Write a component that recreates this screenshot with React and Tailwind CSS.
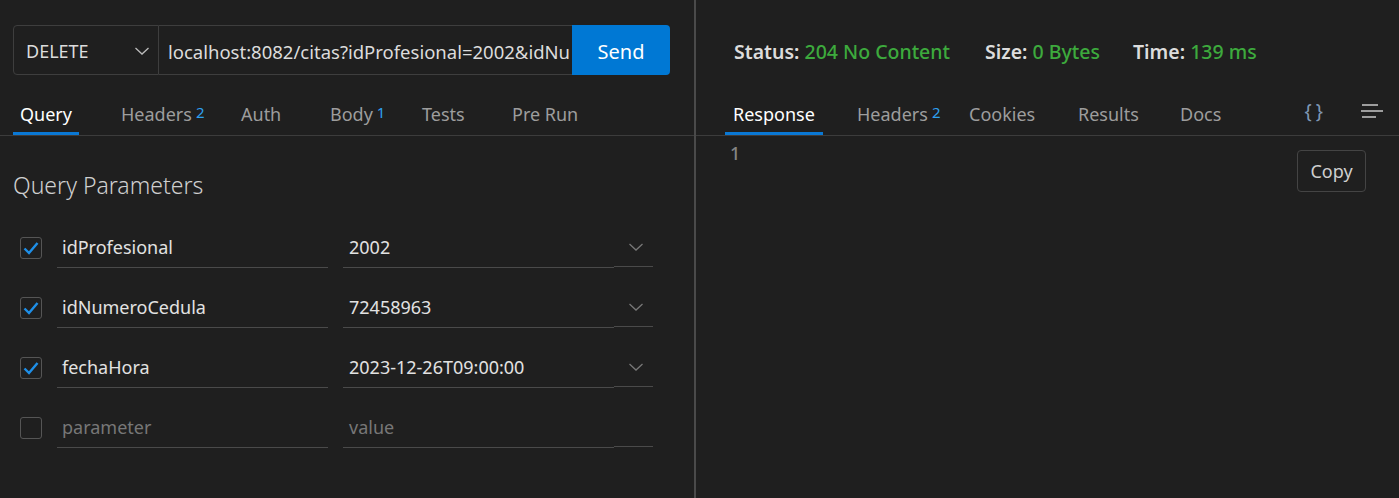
import React from 'react'

const font = { fontFamily: '"Noto Sans", "Open Sans", sans-serif' }

function Chevron({ className }) {
  return (
    <svg className={className} width="16" height="10" viewBox="0 0 16 10" fill="none">
      <path d="M1.5 2l6.5 6 6.5-6" stroke="currentColor" strokeWidth="1.3" />
    </svg>
  )
}

function Checkbox({ checked }) {
  return (
    <div className="w-[22px] h-[22px] rounded-[3px] border border-[#555] flex items-center justify-center">
      {checked && (
        <svg width="16" height="14" viewBox="0 0 16 14" fill="none">
          <path d="M1.5 7.5l4.5 4.5 8.5-10" stroke="#1e8fe8" strokeWidth="2.4" />
        </svg>
      )}
    </div>
  )
}

function ParamRow({ checked, name, value, placeholder }) {
  return (
    <div className="flex items-center h-[40px]">
      <div className="w-[44px] pl-[7px]">
        <Checkbox checked={checked} />
      </div>
      <div className="w-[271px] h-full flex items-center pl-[5px] border-b border-[#4a4a4a]">
        {name ? (
          <span className="text-[#e2e2e2]">{name}</span>
        ) : (
          <span className="text-[#777]">{placeholder[0]}</span>
        )}
      </div>
      <div className="ml-[15px] flex h-full">
        <div className="w-[271px] h-full flex items-center pl-[6px] border-b border-[#4a4a4a]">
          {value ? (
            <span className="text-[#e2e2e2]">{value}</span>
          ) : (
            <span className="text-[#777]">{placeholder[1]}</span>
          )}
        </div>
        <div className="w-[39px] h-[39px] flex items-center justify-center border-b border-[#4a4a4a] text-[#777]">
          {checked && <Chevron className="ml-[4px]" />}
        </div>
      </div>
    </div>
  )
}

function Tab({ t, w, px }) {
  return (
    <div className={`${w} shrink-0`}>
      <div className={`inline-block ${px} pb-[4px] border-b-[3px] ${t.active ? 'border-[#0a78d4] text-white' : 'border-transparent text-[#9d9d9d]'}`}>
        {t.label}
        {t.sup && <sup className="text-[#2ea1f0] text-[15px] ml-[4px] relative top-[-3px]">{t.sup}</sup>}
      </div>
    </div>
  )
}

export default function App() {
  const leftTabs = [
    { label: 'Query', w: 'w-[101px]', active: true },
    { label: 'Headers', sup: '2', w: 'w-[120px]' },
    { label: 'Auth', w: 'w-[89px]' },
    { label: 'Body', sup: '1', w: 'w-[92px]' },
    { label: 'Tests', w: 'w-[90px]' },
    { label: 'Pre Run', w: 'w-[100px]' },
  ]
  const rightTabs = [
    { label: 'Response', w: 'w-[124px]', active: true },
    { label: 'Headers', sup: '2', w: 'w-[112px]' },
    { label: 'Cookies', w: 'w-[109px]' },
    { label: 'Results', w: 'w-[102px]' },
    { label: 'Docs', w: 'w-[100px]' },
  ]

  return (
    <div className="w-[1399px] h-[498px] bg-[#1f1f1f] flex text-[18px] overflow-hidden" style={font}>
      {/* Request panel */}
      <div className="w-[694px] h-full flex flex-col">
        <div className="pt-[25px] pl-[13px] pr-[24px]">
          <div className="flex h-[50px]">
            <div className="w-[146px] flex items-center justify-between pl-[12px] pr-[8px] pt-[3px] border border-[#3e3e3e] rounded-l-[4px] text-[#dcdcdc]">
              <span>DELETE</span>
              <Chevron className="text-[#bbb] -mt-[2px]" />
            </div>
            <div className="flex-1 min-w-0 flex items-center border-y border-[#3e3e3e] pl-[9px] pt-[3px] overflow-hidden whitespace-nowrap text-[18.5px] text-[#dcdcdc]">
              <span className="overflow-hidden">localhost:8082/citas?idProfesional=2002&amp;idNu</span>
            </div>
            <button className="w-[98px] shrink-0 bg-[#0078d4] text-white text-[20px] pt-[3px] rounded-r-[4px]">Send</button>
          </div>
        </div>

        <div className="h-[61px] flex items-end border-b border-[#3c3c3c] pl-[13px]">
          {leftTabs.map((t) => (
            <Tab key={t.label} t={t} w={t.w} px="px-[7px]" />
          ))}
        </div>

        <div className="pl-[13px] h-[92px] flex items-center pt-[7px]">
          <span className="text-[23px] text-[#cfcfcf] font-light">Query Parameters</span>
        </div>

        <div className="pl-[13px] flex flex-col gap-[20px]">
          <ParamRow checked name="idProfesional" value="2002" />
          <ParamRow checked name="idNumeroCedula" value="72458963" />
          <ParamRow checked name="fechaHora" value="2023-12-26T09:00:00" />
          <ParamRow placeholder={['parameter', 'value']} />
        </div>
      </div>

      <div className="w-[2px] h-full bg-[#4a4a4a]" />

      {/* Response panel */}
      <div className="flex-1 h-full flex flex-col">
        <div className="h-[75px] pt-[29px] flex items-center pl-[38px] text-[19.5px] font-semibold text-[#dcdcdc]">
          <span className="w-[251px] shrink-0">Status: <span className="text-[#3daa3d] font-medium">204 No Content</span></span>
          <span className="w-[148px] shrink-0">Size: <span className="text-[#3daa3d] font-medium">0 Bytes</span></span>
          <span className="shrink-0">Time: <span className="text-[#3daa3d] font-medium">139 ms</span></span>
        </div>

        <div className="h-[61px] flex items-end border-b border-[#3c3c3c] pl-[29px] pr-[14px]">
          {rightTabs.map((t) => (
            <Tab key={t.label} t={t} w={t.w} px="px-[8px]" />
          ))}
          <div className="ml-auto flex items-center gap-[34px] pb-[10px]">
            <span className="text-[#7f97b5] text-[19px] tracking-[4px]">{'{}'}</span>
            <svg width="24" height="16" viewBox="0 0 24 16" fill="none">
              <path d="M1 2h16M0 8h22M1 14h14" stroke="#c8c8c8" strokeWidth="1.5" />
            </svg>
          </div>
        </div>

        <div className="flex justify-between pl-[34px] pr-[33px] pt-[4px]">
          <span className="text-[#858585] text-[18px] font-medium">1</span>
          <button className="mt-[10px] w-[69px] h-[42px] border border-[#444] rounded-[4px] text-[#cfcfcf]">Copy</button>
        </div>
      </div>
    </div>
  )
}
